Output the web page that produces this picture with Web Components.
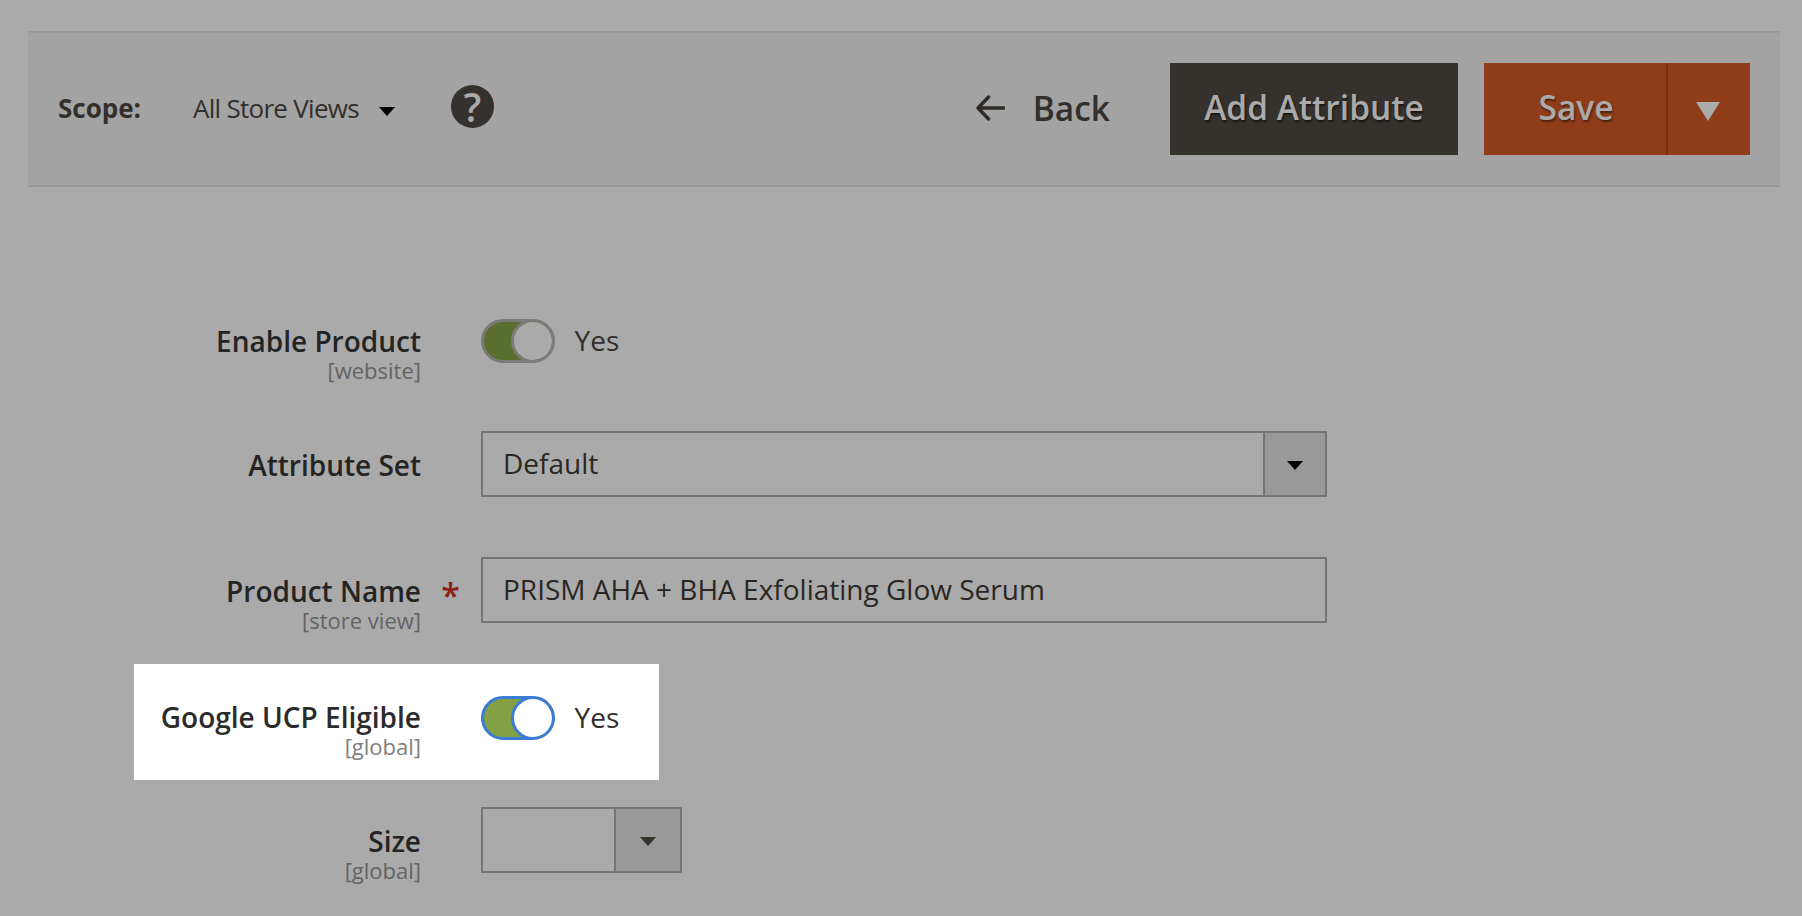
<!DOCTYPE html>
<html lang="en"><head><meta charset="utf-8"><title>Product</title>
<style>
html,body{margin:0;padding:0;height:916px;overflow:hidden;background:#aaa;font-family:"Open Sans",sans-serif;color:#2b2b2b}
main{display:block;padding-top:31px}
.form{display:flex;flex-direction:column;padding:132px 0 0 134px}
</style></head><body>
<template id="t-toolbar"><style>
:host{display:flex;align-items:center;box-sizing:border-box;height:156px;margin:0 22px 0 28px;padding:0 30px;background:#a3a3a3;border-top:2px solid #9a9a9a;border-bottom:2px solid #9a9a9a}
.left,.right{display:flex;align-items:center}
.right{margin-left:auto;gap:25px}
</style><div class="left"><slot name="left"></slot></div><div class="right"><slot name="right"></slot></div></template>

<template id="t-scope"><style>
:host{display:flex;align-items:center;font-size:26px;color:#332f2b;padding-bottom:3px}
b{font-weight:700;margin-right:52px;font-size:26px}
span{letter-spacing:-.72px}
i{display:block;width:0;height:0;border:8px solid transparent;border-top:9px solid #000;border-bottom:0;margin:7px 56px 0 20px}
.h{display:flex;align-items:center;justify-content:center;width:43px;height:43px;border-radius:50%;background:#35312c;color:#aaa;font-size:39px;font-weight:600;line-height:43px;margin-top:-3px}
</style><b>Scope:</b><span>All Store Views</span><i></i><div class="h">?</div></template>

<template id="t-back"><style>
:host{display:flex;align-items:center;gap:28px;font-size:33.500px;font-weight:600;color:#332f2b;margin-right:35px;padding-bottom:3px}
svg{display:block}
</style><svg width="29" height="26" viewBox="0 0 29 26"><path d="M12.500 2 2 13 12.500 24M3 13h25" fill="none" stroke="#2f2b27" stroke-width="3.400" stroke-linecap="round" stroke-linejoin="round"/></svg><span>Back</span></template>

<template id="t-button"><style>
:host{display:flex;align-items:center;justify-content:center;box-sizing:border-box;height:92px;width:288px;padding-bottom:4px;background:#35312c;color:#aaa;font-size:33.500px;font-weight:600;text-shadow:1px 2px 2px rgba(0,0,0,.55)}
</style><slot></slot></template>

<template id="t-split"><style>
:host{display:flex;height:92px;width:266px;margin-left:1px;background:#8f3d19;color:#aaa;font-size:33.500px;font-weight:600;text-shadow:1px 2px 2px rgba(0,0,0,.45)}
.m{flex:0 0 184px;display:flex;align-items:center;justify-content:center;border-right:2px solid #7a3212;box-sizing:border-box;padding:0 0 4px 2px}
.d{flex:1;display:flex;align-items:center;justify-content:center;padding-right:2px}
i{display:block;width:0;height:0;border:12px solid transparent;border-top:19px solid #aaa;border-bottom:0;margin-top:4px}
</style><div class="m"><slot></slot></div><div class="d"><i></i></div></template>

<template id="t-field"><style>
:host{display:grid;grid-template-columns:287px 60px max-content;align-items:start;box-sizing:border-box;--lp:17px}
:host([toggle]){--lp:5px}
:host([hl]){background:#fff;width:525px;height:116px;padding-top:32px;--lp:4px}
.l{text-align:right;font-size:28px;font-weight:600;line-height:34px;color:#242424;padding-top:var(--lp)}
.s{display:block;font-size:22px;font-weight:400;line-height:26px;margin-top:-1px;color:#636363}
:host([hl]) .s{color:#808080}
:host([hl]) .l{color:#2b2b2b}
.r{color:#8e1d15;font-size:34px;font-weight:600;line-height:40px;text-align:right;padding:calc(var(--lp) + 1px) 21px 0 0;box-sizing:border-box}
</style><div class="l"><slot></slot><span class="s"><slot name="scope"></slot></span></div><div class="r"><slot name="req"></slot></div><div><slot name="control"></slot></div></template>

<template id="t-toggle"><style>
:host{display:flex;align-items:center;gap:19.500px;font-size:28px;color:#332f2b}
.t{display:block;position:relative;box-sizing:border-box;width:74px;height:44px;border-radius:22px;border:3px solid #7c7a76;background:#5a6e2f;overflow:hidden}
.t::after{content:"";position:absolute;right:-3px;top:-3px;width:44px;height:44px;box-sizing:border-box;border-radius:50%;background:#aaa;border:3px solid #7c7a76}
:host([focus]) .t{border-color:#3a7bd5;background:#84a044}
:host([focus]) .t::after{background:#fff;border-color:#3a7bd5}
span:last-child{padding-bottom:2px}
</style><span class="t"></span><span><slot></slot></span></template>

<template id="t-select"><style>
:host{display:flex;box-sizing:border-box;height:66px;border:2px solid #757575;width:var(--w,846px);font-size:28px;color:#2a2723;align-items:stretch}
.v{flex:1;display:flex;align-items:center;padding-left:20px;padding-bottom:3px}
.b{flex:0 0 var(--bw,62px);box-sizing:border-box;background:#999;border-left:2px solid #757575;display:flex;align-items:center;justify-content:center}
i{display:block;width:0;height:0;border:8px solid transparent;border-top:9px solid var(--a,#000);border-bottom:0;margin-top:2px}
</style><div class="v"><slot></slot></div><div class="b"><i></i></div></template>

<template id="t-input"><style>
:host{display:flex;align-items:center;box-sizing:border-box;height:66px;width:846px;border:2px solid #757575;padding:0 20px 3px;font-size:28px;color:#2a2723}
</style><slot></slot></template>

<main>
<x-toolbar>
  <x-scope slot="left"></x-scope>
  <x-back slot="right"></x-back>
  <x-btn slot="right">Add Attribute</x-btn>
  <x-split slot="right">Save</x-split>
</x-toolbar>
<div class="form">
  <x-field toggle>Enable Product<span slot="scope">[website]</span><x-toggle slot="control">Yes</x-toggle></x-field>
  <x-field style="margin-top:48px">Attribute Set<x-select slot="control">Default</x-select></x-field>
  <x-field style="margin-top:60px">Product Name<span slot="scope">[store view]</span><span slot="req">*</span><x-input slot="control">PRISM AHA + BHA Exfoliating Glow Serum</x-input></x-field>
  <x-field hl style="margin-top:31px">Google UCP Eligible<span slot="scope">[global]</span><x-toggle slot="control" focus>Yes</x-toggle></x-field>
  <x-field style="margin-top:27px">Size<span slot="scope">[global]</span><x-select slot="control" style="--w:201px;--bw:66px;--a:#35312c"></x-select></x-field>
</div>
</main>
<script>
for (const [tag,id] of [['x-toolbar','t-toolbar'],['x-scope','t-scope'],['x-back','t-back'],['x-btn','t-button'],['x-split','t-split'],['x-field','t-field'],['x-toggle','t-toggle'],['x-select','t-select'],['x-input','t-input']]) {
  customElements.define(tag, class extends HTMLElement {
    constructor(){super();this.attachShadow({mode:'open'}).appendChild(document.getElementById(id).content.cloneNode(true));}
  });
}
</script>
</body></html>
